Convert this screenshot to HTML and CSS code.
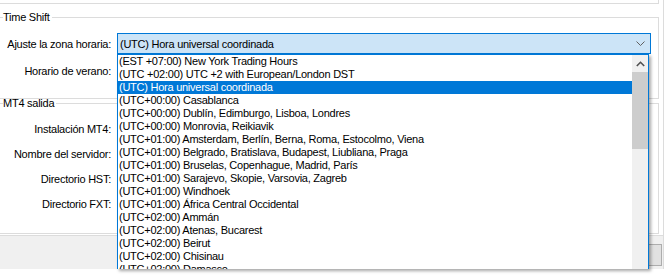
FILE: index.html
```
<!DOCTYPE html>
<html>
<head>
<meta charset="utf-8">
<link rel="stylesheet" href="styles.css">
</head>
<body>
<div class="page">
  <div class="prev-box"></div>
  <fieldset class="group group-time">
    <legend>Time Shift</legend>
    <div class="row">
      <label class="lbl">Ajuste la zona horaria:</label>
      <div class="combo">
        <span class="combo-text">(UTC) Hora universal coordinada</span>
        <svg class="chev" width="9" height="6" viewBox="0 0 9 6"><polyline points="0.5,0.5 4.5,4.5 8.5,0.5" fill="none" stroke="#606060" stroke-width="1"/></svg>
      </div>
    </div>
    <div class="row">
      <label class="lbl">Horario de verano:</label>
    </div>
  </fieldset>
  <fieldset class="group group-mt4">
    <legend>MT4 salida</legend>
    <div class="row"><label class="lbl">Instalación MT4:</label></div>
    <div class="row"><label class="lbl">Nombre del servidor:</label></div>
    <div class="row"><label class="lbl">Directorio HST:</label></div>
    <div class="row"><label class="lbl">Directorio FXT:</label></div>
  </fieldset>
  <div class="footer">
    <div class="btn"></div>
  </div>

  <div class="dropdown">
    <ul class="items">
      <li>(EST +07:00) New York Trading Hours</li>
      <li>(UTC +02:00) UTC +2 with European/London DST</li>
      <li class="sel">(UTC) Hora universal coordinada</li>
      <li>(UTC+00:00) Casablanca</li>
      <li>(UTC+00:00) Dublín, Edimburgo, Lisboa, Londres</li>
      <li>(UTC+00:00) Monrovia, Reikiavik</li>
      <li>(UTC+01:00) Amsterdam, Berlín, Berna, Roma, Estocolmo, Viena</li>
      <li>(UTC+01:00) Belgrado, Bratislava, Budapest, Liubliana, Praga</li>
      <li>(UTC+01:00) Bruselas, Copenhague, Madrid, París</li>
      <li>(UTC+01:00) Sarajevo, Skopie, Varsovia, Zagreb</li>
      <li>(UTC+01:00) Windhoek</li>
      <li>(UTC+01:00) África Central Occidental</li>
      <li>(UTC+02:00) Ammán</li>
      <li>(UTC+02:00) Atenas, Bucarest</li>
      <li>(UTC+02:00) Beirut</li>
      <li>(UTC+02:00) Chisinau</li>
      <li>(UTC+02:00) Damasco</li>
    </ul>
    <div class="scrollbar">
      <div class="sb-up">
        <svg width="9" height="6" viewBox="0 0 9 6"><polyline points="0.8,5 4.5,1.3 8.2,5" fill="none" stroke="#505050" stroke-width="1.6"/></svg>
      </div>
      <div class="sb-thumb"></div>
    </div>
  </div>
</div>
</body>
</html>
```

FILE: styles.css
```
html, body {
  margin: 0;
  padding: 0;
  background: #ffffff;
}
body {
  font-family: "Liberation Sans", Arial, sans-serif;
  font-size: 11px;
  letter-spacing: -0.25px;
  color: #000;
  width: 671px;
  height: 278px;
  overflow: hidden;
}
.page {
  position: relative;
  width: 663px;
  height: 269px;
  border-right: 1px solid #dcdcdc;
  display: flex;
  flex-direction: column;
}
.prev-box {
  height: 3px;
  width: 658px;
  border-bottom: 1px solid #dcdcdc;
  border-right: 1px solid #dcdcdc;
  flex: none;
}
.group {
  margin: 0 4px 0 0;
  padding: 0;
  border: 1px solid #dcdcdc;
  border-left: none;
  min-width: 0;
  flex: none;
}
.group legend {
  padding: 0 2px 0 0;
  margin-left: 3px;
  line-height: 12px;
  height: 12px;
}
.group-time {
  margin-top: 7px;
  padding-top: 10px;
  padding-bottom: 17px;
}
.group-mt4 {
  margin-top: -2px;
  padding-top: 9px;
  padding-bottom: 19px;
}
.row {
  display: flex;
  align-items: center;
  height: 21px;
}
.row + .row {
  margin-top: 4px;
}
.group-time .row + .row {
  margin-top: 6px;
}
.lbl {
  width: 111px;
  text-align: right;
  flex: none;
  white-space: nowrap;
}
.combo {
  margin-left: 6px;
  width: 530px;
  height: 19px;
  border: 1px solid #0078d7;
  background: #cce4f7;
  display: flex;
  align-items: center;
  padding: 0 0 0 2px;
  box-sizing: content-box;
}
.combo-text {
  flex: 1;
  white-space: nowrap;
}
.chev {
  margin-right: 5px;
  flex: none;
}
.footer {
  margin-top: 1px;
  flex: 1;
  background: #f0f0f0;
  border-top: 1px solid #dcdcdc;
  display: flex;
  justify-content: flex-end;
  align-items: flex-start;
  padding-top: 8px;
}
.btn {
  width: 75px;
  height: 20px;
  margin-right: 1px;
  background: #e1e1e1;
  border: 1px solid #adadad;
}
.dropdown {
  position: absolute;
  left: 117px;
  top: 54px;
  width: 530px;
  height: 214px;
  border: 1px solid #0078d7;
  border-bottom: none;
  background: #fff;
  box-shadow: 2px 2px 3px rgba(0, 0, 0, 0.35);
  display: flex;
  overflow: hidden;
}
.items {
  list-style: none;
  margin: 0;
  padding: 0;
  flex: 1;
}
.items li {
  height: 13px;
  line-height: 13px;
  padding-left: 1px;
  white-space: nowrap;
}
.items li.sel {
  background: #0078d7;
  color: #fff;
}
.scrollbar {
  width: 16px;
  background: #f0f0f0;
  flex: none;
  display: flex;
  flex-direction: column;
}
.sb-up {
  height: 17px;
  display: flex;
  align-items: center;
  justify-content: center;
}
.sb-thumb {
  height: 77px;
  background: #cdcdcd;
}
```
